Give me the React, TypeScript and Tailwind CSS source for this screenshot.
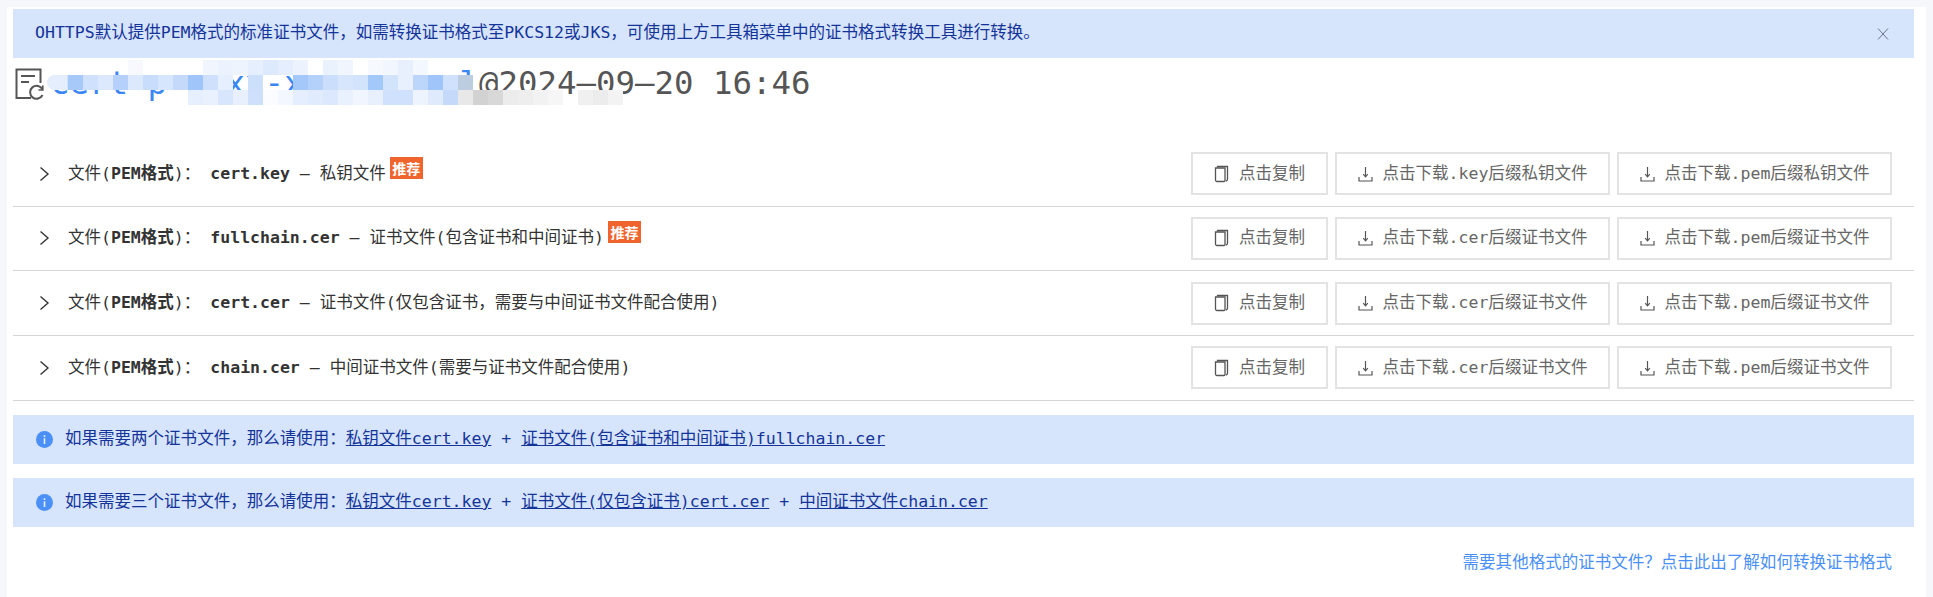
import React from "react";

const _ = null;
const mosaic: (string | null)[][] = [
  [_,_,_,_,_,"#f7f9fe",_,_,_,_,"#f1f5fe","#edf3fe","#eef4fe","#e6effe","#dde9fd","#e4eefe","#ecf3fe",_,"#eaf2fe","#f0f5fe",_,"#f6f9fe","#f2f6fe","#e8f0fe","#f3f7ff",_,_,_,_,_,_,_,_,_,_,_,_,_,_],
  ["#d2e3fc","#a6c9fa","#cfe1fc","#dce9fd","#b4d0fb","#dce9fd","#c8dcfc","#d6e6fc","#c5dafb","#9fc5fa","#cfe0fc","#e6effe",_,"#cce0fc",_,_,"#a5c8fa","#b4d1fb","#cbdefc","#d8e6fd","#d2e3fc","#a3c8fa","#d2e3fc","#e8f0fe","#bcd6fb","#9fc5fa","#cfe1fc","#bccde0",_,_,_,_,_,_,_,_,_,_,_],
  [_,_,_,_,_,_,_,_,_,"#e6effd","#e9f1fe","#d8e6fd","#e8f0fe","#cee0fc","#fafcff","#f3f7ff","#e4eefe","#e0ebfd","#dbe8fd","#eaf1fe","#f0f5ff","#e8f0fe","#cfe1fc","#cfe1fc","#eef4fe","#dfeafd","#c5dafb","#e8e8e8","#d2d2d2","#d8d8d8","#ececec","#eeeeee","#f2f2f2","#f6f6f6",_,"#f0f0f0","#ececec","#f3f3f3",_],
];

function CopyIcon() {
  return (
    <svg width="15" height="18" viewBox="0 0 15 18" fill="none" stroke="#555" strokeWidth="1.3">
      <path d="M3.5 2.5 V1.5 H13.5 V14 a2 2 0 0 1 -1.5 2" />
      <path d="M1.5 3 H11 V15.5 a1 1 0 0 1 -1 1 H3 a1.5 1.5 0 0 1 -1.5 -1.5 Z" />
    </svg>
  );
}

function DownloadIcon() {
  return (
    <svg width="15" height="18" viewBox="0 0 15 18" fill="none" stroke="#555" strokeWidth="1.2">
      <path d="M7.5 2 V11.5" />
      <path d="M5.2 9.2 L7.5 11.8 L9.8 9.2" />
      <path d="M1 12 V16 H14 V12" />
    </svg>
  );
}

function Btn({ icon, label, wide }: { icon: React.ReactNode; label: string; wide?: boolean }) {
  return (
    <button className={`flex h-[43px] items-center justify-center gap-[10px] border-2 border-[#e3e3e3] bg-white text-[#666] ${wide ? "w-[275px]" : "w-[137px]"}`}>
      {icon}
      <span>{label}</span>
    </button>
  );
}

function Row({ name, desc, tag, keyLabel, pemLabel }: { name: string; desc: string; tag?: boolean; keyLabel: string; pemLabel: string }) {
  return (
    <div className="flex h-[64.67px] items-center justify-between border-b border-[#d6d6d6] pr-[22px] pl-[26px]">
      <div className="flex items-center text-[#333]">
        <svg width="11" height="16" viewBox="0 0 11 16" fill="none" stroke="#333" strokeWidth="1.4" className="mr-[18px]">
          <path d="M1.5 1.5 L9 8 L1.5 14.5" />
        </svg>
        <span>文件(<b className="font-bold">PEM格式</b>)：</span>
        <b className="ml-[10px] font-bold">{name}</b>
        <span className="whitespace-pre"> – {desc}</span>
        {tag && (
          <span className="relative top-[-6px] ml-[4px] flex h-[22px] w-[33px] items-center justify-center bg-[#f0652e] font-['Noto_Sans_CJK_SC',sans-serif] text-[14px] font-bold text-white">
            推荐
          </span>
        )}
      </div>
      <div className="flex gap-[7px]">
        <Btn icon={<CopyIcon />} label="点击复制" />
        <Btn icon={<DownloadIcon />} label={keyLabel} wide />
        <Btn icon={<DownloadIcon />} label={pemLabel} wide />
      </div>
    </div>
  );
}

function Info({ children }: { children: React.ReactNode }) {
  return (
    <div className="flex h-[49px] items-center whitespace-pre bg-[#d6e4fc] pl-[23px] text-[#14349a]">
      <svg width="17" height="17" viewBox="0 0 17 17" className="mr-[12px] shrink-0">
        <circle cx="8.5" cy="8.5" r="8.5" fill="#4a90f7" />
        <rect x="7.7" y="7.2" width="1.6" height="5.8" fill="#e6f0ff" />
        <rect x="7.7" y="4.2" width="1.6" height="1.7" fill="#e6f0ff" />
      </svg>
      {children}
    </div>
  );
}

export default function App() {
  return (
    <div className="h-[597px] overflow-hidden bg-[#f5f7fb] pt-[7px] pr-[7px] pl-[7px] font-['DejaVu_Sans_Mono','Noto_Sans_CJK_SC',monospace] text-[16.52px] leading-none">
      <div className="h-[590px] bg-white pt-[2px] pr-[12px] pl-[6px]">
        <div className="flex h-[49px] items-center justify-between bg-[#d6e4fc] pr-[25px] pl-[22px] text-[#14349a]">
          <span>OHTTPS默认提供PEM格式的标准证书文件，如需转换证书格式至PKCS12或JKS，可使用上方工具箱菜单中的证书格式转换工具进行转换。</span>
          <svg width="12" height="12" viewBox="0 0 12 12" fill="none" stroke="#6b7686" strokeWidth="1">
            <path d="M1 0.5 L11 11.5 M11 0.5 L1 11.5" />
          </svg>
        </div>

        <div className="relative flex h-[84px] items-start pt-[9px] pl-[2px]">
          <svg width="29" height="32" viewBox="0 0 29 32" fill="none" stroke="#555" strokeWidth="2" className="mt-[1px] mr-[6px] shrink-0">
            <path d="M16 30 H1.5 V1.5 H25.5 V15" />
            <path d="M6 8 H20 M6 14 H14" />
            <path d="M27.5 21.5 A6.5 6.5 0 1 0 27.5 27" />
            <path d="M27.8 17.5 V22 H23.5" strokeWidth="1.6" />
          </svg>
          <div className="mt-[-6px] text-[32.4px] leading-[44px] whitespace-pre">
            <span className="text-[#3b86f5]">cert-p-xxxx-xxxxxx.xml</span>
            <span className="text-[#555]">@2024–09–20 16:46</span>
          </div>
          <div className="absolute top-[2px] left-[40px]">
            <div className="absolute top-[15px] left-[-6px] h-[15px] w-[20px] rounded-l-full bg-[#e5eefd]" />
            {mosaic.map((row, r) => (
              <div key={r} className="flex">
                {row.map((c, i) => (
                  <div key={i} className="h-[15px] w-[15px] shrink-0" style={{ background: c ?? "transparent" }} />
                ))}
              </div>
            ))}
          </div>
        </div>

        <Row name="cert.key" desc="私钥文件" tag keyLabel="点击下载.key后缀私钥文件" pemLabel="点击下载.pem后缀私钥文件" />
        <Row name="fullchain.cer" desc="证书文件(包含证书和中间证书)" tag keyLabel="点击下载.cer后缀证书文件" pemLabel="点击下载.pem后缀证书文件" />
        <Row name="cert.cer" desc="证书文件(仅包含证书，需要与中间证书文件配合使用)" keyLabel="点击下载.cer后缀证书文件" pemLabel="点击下载.pem后缀证书文件" />
        <Row name="chain.cer" desc="中间证书文件(需要与证书文件配合使用)" keyLabel="点击下载.cer后缀证书文件" pemLabel="点击下载.pem后缀证书文件" />

        <div className="mt-[14px] flex flex-col gap-[14px]">
          <Info>
            如果需要两个证书文件，那么请使用：<a className="underline">私钥文件cert.key</a> + <a className="underline">证书文件(包含证书和中间证书)fullchain.cer</a>
          </Info>
          <Info>
            如果需要三个证书文件，那么请使用：<a className="underline">私钥文件cert.key</a> + <a className="underline">证书文件(仅包含证书)cert.cer</a> + <a className="underline">中间证书文件chain.cer</a>
          </Info>
        </div>

        <div className="mt-[26px] pr-[22px] text-right font-['Noto_Sans_CJK_SC',sans-serif] text-[#4a90f7]">
          需要其他格式的证书文件？点击此出了解如何转换证书格式
        </div>
      </div>
    </div>
  );
}
